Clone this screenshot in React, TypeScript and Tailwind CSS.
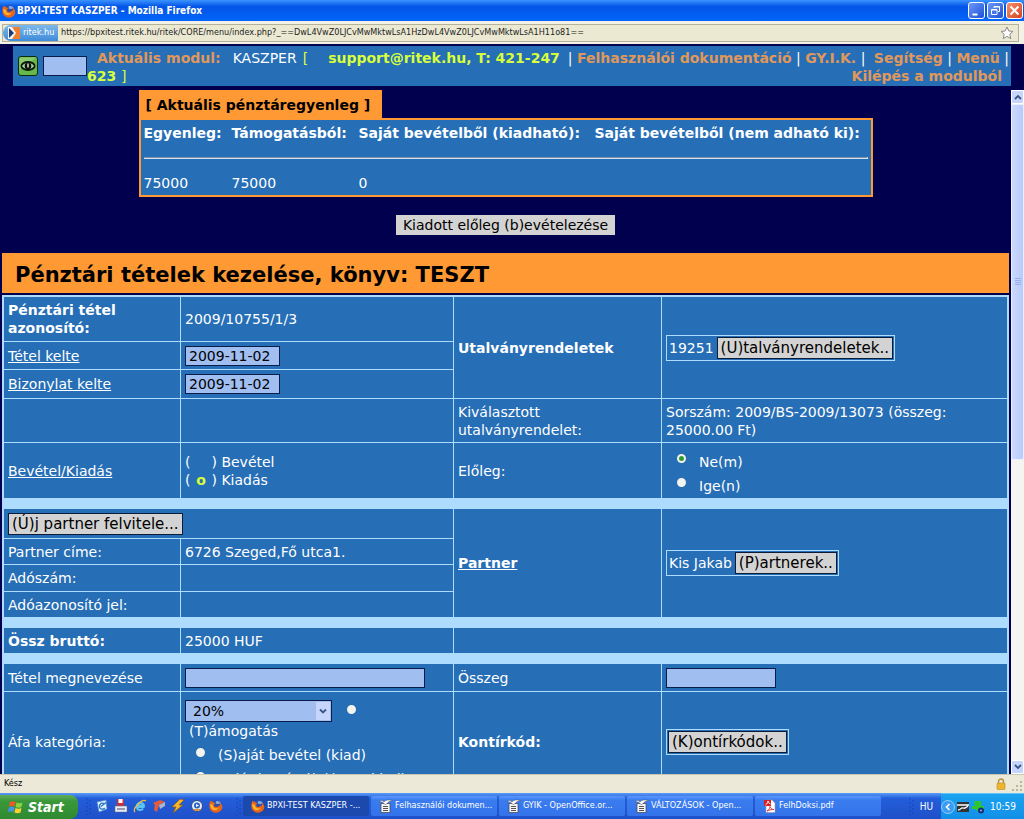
import React from "react";

const UI = "font-['DejaVu_Sans_Condensed','DejaVu_Sans',sans-serif]";

function FirefoxIcon({ className = "size-3.5" }: { className?: string }) {
  return (
    <svg viewBox="0 0 16 16" className={className + " shrink-0"} aria-hidden="true">
      <circle cx="8.5" cy="7.5" r="6" fill="#2b4fa8" />
      <path d="M8 2.500c2-.8 4.500 0 5.500 2l-3 1.500-3-1z" fill="#7fa9e6" />
      <path d="M1.500 2c1 .8 1.800 1 3 1L7 5 5.500 7c1 2.500 4 2.500 5 1 2 .5 2.500-2 1.500-4 3 1.500 4 5 2.500 8-2 4-8.500 5-12 1.500C-.5 10.500.2 5.500 1.500 2z" fill="#e8641b" />
      <path d="M1.800 5c.8 1 1.700 1.500 2.700 1.500C4 10 8 12 11 10c-1 3-6 4-8.300.5C1.500 9 1.200 7 1.800 5z" fill="#ffb52e" />
    </svg>
  );
}

function WriterIcon() {
  return (
    <svg viewBox="0 0 14 14" className="size-3.5 shrink-0" aria-hidden="true">
      <path d="M2 4.500h9v9H2z" fill="#f4f4f4" stroke="#444" strokeWidth=".7" />
      <path d="M4 7.500h5M4 9.500h5M4 11.500h5" stroke="#555" />
      <path d="M0 2.500c2-1.500 3.800-1 5 .5C6.500 1 9 .5 13.500 1.500 10.500 2 8.500 3.500 6.500 6 5 3.800 3 2.800 0 2.500z" fill="#fff" stroke="#555" strokeWidth=".5" />
    </svg>
  );
}

function PdfIcon() {
  return (
    <svg viewBox="0 0 14 14" className="size-3.5 shrink-0" aria-hidden="true">
      <path d="M3 1h6l3 3v9.500H3z" fill="#fff" stroke="#999" strokeWidth=".6" />
      <path d="M1 1h7v6H1z" fill="#d4202a" />
      <path d="M2.500 6c2-1.500 2.500-3 2.500-4 .5 2 1.500 2.500 2.500 3" stroke="#fff" fill="none" />
      <path d="M4 12c3-2 3-3.500 3-4.500.5 2 2 3 4 3-2.500 0-5 .5-7 1.500z" stroke="#d4202a" strokeWidth=".9" fill="none" />
    </svg>
  );
}

function TitleBar() {
  return (
    <header className="flex h-[21px] shrink-0 items-center gap-px bg-linear-to-b from-[#3a93ff] via-[#0455e6] via-30% to-[#0065fb] pr-px pl-0.5 text-white">
      <FirefoxIcon />
      <h1 className="flex-1 text-[10px] font-bold whitespace-nowrap">BPXI-TEST KASZPER - Mozilla Firefox</h1>
      <div className="flex gap-0.5">
        <button aria-label="Kis méret" className="size-[17px] rounded-[3px] border border-white bg-linear-to-br from-[#6d97f8] to-[#1c4fd8]">
          <svg viewBox="0 0 15 15"><path d="M3.500 10.500h5v2h-5z" fill="#fff" /></svg>
        </button>
        <button aria-label="Előző méret" className="size-[17px] rounded-[3px] border border-white bg-linear-to-br from-[#6d97f8] to-[#1c4fd8]">
          <svg viewBox="0 0 15 15" fill="none" stroke="#fff"><path d="M6 5V3.500h5.500v5H10M6 4h5.500M3.500 6.500h5.500v5H3.500zM3.500 7h5.500" /></svg>
        </button>
        <button aria-label="Bezárás" className="size-[17px] rounded-[3px] border border-white bg-linear-to-br from-[#f0906c] to-[#d8401a]">
          <svg viewBox="0 0 15 15" stroke="#fff" strokeWidth="2"><path d="M3.500 3.500l8 8M11.500 3.500l-8 8" /></svg>
        </button>
      </div>
    </header>
  );
}

function AddressBar() {
  return (
    <div className="h-[23px] shrink-0 bg-[#f4f2e6] pt-[3px] pr-[5px] pl-0.5">
      <div className="flex h-[18px] items-center border border-[#b5b29c] bg-[#ece9d3] pr-1">
        <span className="flex h-4 w-[55px] shrink-0 items-center gap-[3px] rounded-l-lg bg-linear-to-b from-[#7cb8ea] to-[#3f8bd8] pl-[5px] text-[9px] text-white">
          <svg viewBox="0 0 12 12" className="size-3 shrink-0" aria-hidden="true">
            <path d="M0 0h12v12H0z" fill="#f5f5f5" />
            <path d="M4 0h8v12H4l4-6z" fill="#f08030" />
            <path d="M1 1l5 5-5 5z" fill="#1d3c78" />
          </svg>
          ritek.hu
        </span>
        <input
          aria-label="Cím"
          className="min-w-0 flex-1 bg-transparent pl-[3px] text-[9px] text-[#222] outline-none"
          defaultValue="https://bpxitest.ritek.hu/ritek/CORE/menu/index.php?_==DwL4VwZ0LJCvMwMktwLsA1HzDwL4VwZ0LJCvMwMktwLsA1H11o81=="
        />
        <svg viewBox="0 0 14 14" className="size-3.5 shrink-0" aria-hidden="true">
          <path d="M7 1l1.800 4 4.200.4-3.200 2.900 1 4.400L7 10.400l-3.800 2.300 1-4.400L1 5.400 5.200 5z" fill="#fff" stroke="#8a8a8a" />
        </svg>
      </div>
    </div>
  );
}

function Bar() {
  return <span className="font-normal text-white">|</span>;
}

function ModuleHeader() {
  return (
    <div className="shrink-0 bg-[#00004f] pt-0.5 pr-[13px] pb-1 pl-[13px]">
      <div className="flex h-10 items-start bg-[#266eb6] text-sm leading-[18px] font-bold whitespace-nowrap">
        <svg viewBox="0 0 20 20" className="mt-2.5 ml-[5px] size-5 shrink-0" aria-hidden="true">
          <rect x=".5" y=".5" width="19" height="19" rx="2.500" fill="#66b84a" stroke="#0b2c10" />
          <path d="M1.500 1.500h17L1.500 14z" fill="#9ed889" opacity=".6" />
          <ellipse cx="10" cy="10" rx="7.500" ry="5" fill="#0c1a0c" />
          <path d="M4 10c2-4 10-4 12 0-2 4-10 4-12 0z" fill="#a8d596" />
          <circle cx="10" cy="10" r="3.300" fill="#0a100a" />
          <path d="M9.300 7.500h1.400v4H9.300z" fill="#e8f8e0" />
        </svg>
        <input aria-label="Gyorskód" className="mt-2.5 ml-[5px] h-5 w-11 shrink-0 border border-[#0a1d4a] bg-[#a1bef0] outline-none" />
        <p className="pt-[3px] text-[#d8ff3c]">
          <span className="pl-2.5 text-[#e0985a]">Aktuális modul:</span>
          <span className="pl-3 font-normal text-white">KASZPER</span>
          <span className="pl-1.5 font-normal">[</span>
          <span className="pr-2 pl-5">support@ritek.hu, T: 421-247</span>
          <br />
          623 <span className="font-normal">]</span>
        </p>
        <nav className="flex-1 pt-[3px] pr-0.5 text-[#e0985a]">
          <div className="flex justify-between">
            <Bar />
            <a href="#dok">Felhasználói dokumentáció</a>
            <Bar />
            <a href="#gyik">GY.I.K.</a>
            <Bar />
            <a href="#segitseg" className="pl-1">Segítség</a>
            <Bar />
            <a href="#menu">Menü</a>
            <Bar />
          </div>
          <div className="pr-[7px] text-right">
            <a href="#kilepes">Kilépés a modulból</a>
          </div>
        </nav>
      </div>
    </div>
  );
}

function Balance() {
  return (
    <section className="mx-auto w-fit">
      <h2 className="h-7 w-fit bg-[#ff9933] pt-1.5 pr-3 pl-[7px] text-sm leading-[18px] font-bold text-black">[ Aktuális pénztáregyenleg ]</h2>
      <div className="border-2 border-[#ff9933] bg-[#266eb6] px-[3px] pb-[3px]">
        <table className="text-sm leading-[18px] text-white">
          <thead>
            <tr className="text-left whitespace-nowrap">
              <th className="min-w-[88px] pt-1">Egyenleg:</th>
              <th className="min-w-[127px] pt-1">Támogatásból:</th>
              <th className="min-w-[236px] pt-1">Saját bevételből (kiadható):</th>
              <th className="min-w-[273px] pt-1">Saját bevételből (nem adható ki):</th>
            </tr>
          </thead>
          <tbody>
            <tr>
              <td colSpan={4} className="py-[15px]">
                <hr className="h-0.5 border-t border-r border-b border-t-[#7f8fa8] border-r-white border-b-[#d5e2f2]" />
              </td>
            </tr>
            <tr>
              <td>75000</td>
              <td>75000</td>
              <td>0</td>
              <td></td>
            </tr>
          </tbody>
        </table>
      </div>
    </section>
  );
}

function GreyButton({ children }: { children: React.ReactNode }) {
  return (
    <button className="h-[22px] border border-[#0c1c38] bg-[#d3d3d3] px-[3px] text-[15px] leading-[18px] whitespace-nowrap text-black">
      {children}
    </button>
  );
}

function Framed({ text, children }: { text?: string; children: React.ReactNode }) {
  return (
    <div className="flex w-fit items-center gap-0.5 border border-[#addcff] p-px">
      {text && <span className="px-px">{text}</span>}
      {children}
    </div>
  );
}

const cell = "bg-[#266eb6] px-1 py-0";
const field = "block border border-[#0a1d4a] bg-[#a1bef0] text-black outline-none";
const radio =
  "size-[9px] shrink-0 appearance-none rounded-full border-2 border-[#f4f4ee] bg-[#f4f4ee] checked:bg-[#2f9a2f]";

function Spacer() {
  return (
    <tr className="h-[9px]">
      <td colSpan={4}></td>
    </tr>
  );
}

function RadioLine({ id, name, label, checked }: { id: string; name: string; label: string; checked?: boolean }) {
  return (
    <div className="flex h-6 items-center gap-[13px] pl-[11px]">
      <input id={id} type="radio" name={name} defaultChecked={checked} className={radio + " mb-1.5"} />
      <label htmlFor={id}>{label}</label>
    </div>
  );
}

function ItemForm() {
  return (
    <table className="w-full table-fixed border-separate border-spacing-px border border-[#addcff] bg-[#addcff] text-sm leading-[18px] text-white">
      <colgroup>
        <col className="w-[176px]" />
        <col className="w-[272px]" />
        <col className="w-[207px]" />
        <col />
      </colgroup>
      <tbody>
        <tr className="h-11">
          <th className={cell + " text-left"}>Pénztári tétel<br />azonosító:</th>
          <td className={cell}>2009/10755/1/3</td>
          <th rowSpan={3} className={cell + " text-left"}>Utalványrendeletek</th>
          <td rowSpan={3} className={cell}>
            <Framed text="19251"><GreyButton>(U)talványrendeletek..</GreyButton></Framed>
          </td>
        </tr>
        <tr className="h-[27px]">
          <td className={cell}><label htmlFor="tetel" className="underline">Tétel kelte</label></td>
          <td className={cell}><input id="tetel" defaultValue="2009-11-02" className={field + " h-5 w-[95px] px-[3px]"} /></td>
        </tr>
        <tr className="h-7">
          <td className={cell}><label htmlFor="bizonylat" className="underline">Bizonylat kelte</label></td>
          <td className={cell}><input id="bizonylat" defaultValue="2009-11-02" className={field + " h-5 w-[95px] px-[3px]"} /></td>
        </tr>
        <tr className="h-[43px]">
          <td className={cell}></td>
          <td className={cell}></td>
          <td className={cell}>Kiválasztott<br />utalványrendelet:</td>
          <td className={cell}>Sorszám: 2009/BS-2009/13073 (összeg: 25000.00 Ft)</td>
        </tr>
        <tr className="h-[55px]">
          <td className={cell}><span className="underline">Bevétel/Kiadás</span></td>
          <td className={cell}>
            <div className="flex"><span>(</span><span className="w-[21px]"></span><span>) Bevétel</span></div>
            <div className="flex"><span>(</span><b className="w-[21px] text-center text-[#d8ff3c]">o</b><span>) Kiadás</span></div>
          </td>
          <td className={cell}>Előleg:</td>
          <td className={cell + " pt-1.5"}>
            <RadioLine id="nem" name="eloleg" label="Ne(m)" checked />
            <RadioLine id="igen" name="eloleg" label="Ige(n)" />
          </td>
        </tr>
        <Spacer />
        <tr className="h-[29px]">
          <td colSpan={2} className={cell}><GreyButton>(Ú)j partner felvitele...</GreyButton></td>
          <th rowSpan={4} className={cell + " text-left"}><span className="underline">Partner</span></th>
          <td rowSpan={4} className={cell}>
            <Framed text="Kis Jakab"><GreyButton>(P)artnerek..</GreyButton></Framed>
          </td>
        </tr>
        <tr className="h-[25px]">
          <td className={cell}>Partner címe:</td>
          <td className={cell}>6726 Szeged,Fő utca1.</td>
        </tr>
        <tr className="h-[26px]">
          <td className={cell}>Adószám:</td>
          <td className={cell}></td>
        </tr>
        <tr className="h-[25px]">
          <td className={cell}>Adóazonosító jel:</td>
          <td className={cell}></td>
        </tr>
        <Spacer />
        <tr className="h-[25px]">
          <th className={cell + " text-left"}>Össz bruttó:</th>
          <td className={cell}>25000 HUF</td>
          <td colSpan={2} className={cell}></td>
        </tr>
        <Spacer />
        <tr className="h-[27px]">
          <td className={cell}><label htmlFor="megnevezes">Tétel megnevezése</label></td>
          <td className={cell}><input id="megnevezes" className={field + " h-5 w-60 px-[3px]"} /></td>
          <td className={cell}><label htmlFor="osszeg">Összeg</label></td>
          <td className={cell}><input id="osszeg" className={field + " h-5 w-[110px] px-[3px]"} /></td>
        </tr>
        <tr className="h-[100px]">
          <td className={cell}><label htmlFor="afa">Áfa kategória:</label></td>
          <td className={cell + " pt-2 align-top"}>
            <div className="flex items-center">
              <div className="grid w-[147px] items-center">
                <select id="afa" className={field + " col-start-1 row-start-1 h-[22px] w-full appearance-none px-[7px]"}>
                  <option>20%</option>
                </select>
                <svg viewBox="0 0 14 18" className="pointer-events-none col-start-1 row-start-1 mr-0.5 h-[18px] w-3.5 justify-self-end" aria-hidden="true">
                  <path d="M0 0h14v18H0z" fill="#c6d5fb" />
                  <path d="M4 7.500l3 3 3-3" stroke="#3d5588" strokeWidth="1.800" fill="none" />
                </svg>
              </div>
              <input id="tamogatas" type="radio" name="forras" className={radio + " mb-1 ml-[15px]"} />
            </div>
            <label htmlFor="tamogatas" className="block pl-1">(T)ámogatás</label>
            <div className="pt-[3px]">
              <RadioLine id="sajat-kiad" name="forras" label="(S)aját bevétel (kiad)" />
              <RadioLine id="sajat-nem" name="forras" label="Saját bevétel(n)(nem kiad)" />
            </div>
          </td>
          <th className={cell + " text-left"}>Kontírkód:</th>
          <td className={cell}><Framed><GreyButton>(K)ontírkódok..</GreyButton></Framed></td>
        </tr>
      </tbody>
    </table>
  );
}

function ScrollBar() {
  const btn = "flex h-3.5 w-full items-center justify-center rounded-xs border border-white bg-[#c6d5fb]";
  return (
    <div className="flex w-[13px] shrink-0 flex-col bg-[#f6f4f2]">
      <button aria-label="Fel" className={btn}>
        <svg viewBox="0 0 8 6" className="w-2"><path d="M1 5l3-3 3 3" stroke="#3d5588" strokeWidth="1.800" fill="none" /></svg>
      </button>
      <div className="flex basis-[52%] items-center justify-center rounded-xs border border-[#e8efff] bg-linear-to-r from-[#cbd9fe] to-[#b9cbfa]">
        <svg viewBox="0 0 6 8" className="w-1.5"><path d="M0 .5h6M0 2.500h6M0 4.500h6M0 6.500h6" stroke="#98b0ee" /></svg>
      </div>
      <div className="flex-1"></div>
      <button aria-label="Le" className={btn}>
        <svg viewBox="0 0 8 6" className="w-2"><path d="M1 1l3 3 3-3" stroke="#3d5588" strokeWidth="1.800" fill="none" /></svg>
      </button>
    </div>
  );
}

function StatusBar() {
  return (
    <div className="flex h-[19px] shrink-0 items-center border-t border-[#c9c6b4] bg-[#ece9d8] pl-1 text-[9px] text-black">
      <span className="flex-1">Kész</span>
      <svg viewBox="0 0 10 12" className="mr-1 h-3 w-2.5" aria-hidden="true">
        <path d="M2.500 6V3.500a2.500 2.500 0 015 0V6" stroke="#b09040" strokeWidth="1.400" fill="none" />
        <rect x="1" y="5" width="8" height="6.500" rx="1" fill="#eeb52c" stroke="#b98a1c" strokeWidth=".6" />
      </svg>
      <svg viewBox="0 0 14 14" className="size-3.5 self-end" aria-hidden="true">
        <path d="M10 2h2v2h-2zM6 6h2v2H6zM10 6h2v2h-2zM2 10h2v2H2zM6 10h2v2H6zM10 10h2v2h-2z" fill="#b8b5a0" />
      </svg>
    </div>
  );
}

function Grip() {
  return (
    <svg viewBox="0 0 5 18" className="h-[18px] w-[5px] shrink-0" aria-hidden="true">
      <path d="M1 1v17M4 3v15" stroke="#123fa8" strokeDasharray="1.500 2.500" />
    </svg>
  );
}

function QuickLaunch() {
  return (
    <div className="flex items-center gap-[5px]">
      <svg viewBox="0 0 14 14" className="size-3.5"><path d="M2 3l9-2 1 9-8 3z" fill="#e8f3ff" stroke="#4b88c8" strokeWidth=".8" /><path d="M9.500 5a3 3 0 10 .3 4M6 7.500l5-4" stroke="#2878c8" strokeWidth="1.400" fill="none" /></svg>
      <svg viewBox="0 0 14 14" className="size-3.5"><path d="M3 0h7v7H3z" fill="#c8313f" /><path d="M4.500 0h4v4h-4z" fill="#fff" /><path d="M1 7h12v6H1z" fill="#e7edf8" stroke="#667" strokeWidth=".5" /><path d="M3 10h8" stroke="#446" /></svg>
      <svg viewBox="0 0 14 14" className="size-3.5"><path d="M11.500 8H4a3 3 0 003 3c1.500 0 2.500-.5 3-1.500M4 6.500c.5-3 6-3.500 7 0z" stroke="#5cc3f5" strokeWidth="2" fill="none" /><path d="M2 13C-1 10 9-1 13 2" stroke="#f0c33a" strokeWidth="1.200" fill="none" /></svg>
      <svg viewBox="0 0 14 14" className="size-3.5"><path d="M1 4l7-3 5 2-6 3-2 7-3-2 1-5z" fill="#e35a3c" /><path d="M7 6l6-3v4l-5 3z" fill="#a9b6c8" /></svg>
      <svg viewBox="0 0 14 14" className="size-3.5"><path d="M9 0L1 8h4l-3 6 10-8H8l5-5z" fill="#f5b52a" stroke="#8b5a10" strokeWidth=".7" /></svg>
      <svg viewBox="0 0 14 14" className="size-3.5"><circle cx="7" cy="7" r="5.500" fill="#e6edf8" stroke="#334b78" /><path d="M3 10a5 5 0 008 0z" fill="#e48a2c" /><circle cx="7" cy="6.500" r="3" fill="#2a62c4" /><path d="M6 5l3 1.500L6 8z" fill="#fff" /></svg>
      <FirefoxIcon />
    </div>
  );
}

function Task({ icon, label, active }: { icon: React.ReactNode; label: string; active?: boolean }) {
  return (
    <button
      className={
        "flex h-5 w-[126px] min-w-0 items-center gap-0.5 rounded-xs pl-2 text-left text-[9px] whitespace-nowrap text-white " +
        (active ? "bg-[#1b49ae]" : "bg-linear-to-b from-[#5a96fb] via-[#3a7cf0] via-20% to-[#3473ea]")
      }
    >
      {icon}
      <span>{label}</span>
    </button>
  );
}

function TaskBar() {
  return (
    <footer className="flex h-[26px] shrink-0 items-center bg-linear-to-b from-[#5c9bf6] via-[#245edb] via-20% to-[#1f50c8]">
      <button className="mt-0.5 flex h-6 w-[78px] shrink-0 items-center gap-1 rounded-r-lg bg-linear-to-b from-[#5fae5c] via-[#3a983a] via-25% to-[#2f8a30] pl-2 text-sm font-bold text-white italic">
        <svg viewBox="0 0 16 16" className="size-4" aria-hidden="true">
          <path d="M2 3c2-1 4-1 5.500 0L6.500 7.500c-2-1-3.500-1-5.500 0z" fill="#ee5a2a" />
          <path d="M8.500 3.500c2 1 4 1 6 0L13.500 8c-2 1-4 1-6 0z" fill="#8bd13f" />
          <path d="M1 8.500c2-1 3.500-1 5.500 0L5.500 13c-2-1-3.500-1-5.500 0z" fill="#4a90f0" />
          <path d="M7.500 9c2 1 4 1 6 0l-1 4.500c-2 1-4 1-6 0z" fill="#fbd030" />
        </svg>
        <span>Start</span>
      </button>
      <div className="flex w-[158px] shrink-0 items-center gap-1 pl-2">
        <Grip />
        <QuickLaunch />
      </div>
      <div className="flex min-w-0 flex-1 items-center gap-0.5">
        <Grip />
        <Task icon={<FirefoxIcon />} label="BPXI-TEST KASZPER -..." active />
        <Task icon={<WriterIcon />} label="Felhasználói dokumen..." />
        <Task icon={<WriterIcon />} label="GYIK - OpenOffice.or..." />
        <Task icon={<WriterIcon />} label="VÁLTOZÁSOK - Open..." />
        <Task icon={<PdfIcon />} label="FelhDoksi.pdf" />
      </div>
      <div className="flex shrink-0 items-center gap-1.5 pr-2 text-[10px] text-white">
        <Grip />
        <span>HU</span>
      </div>
      <div className="flex h-full shrink-0 items-center gap-px border-t border-[#5cc4fa] bg-linear-to-b from-[#1ba2f0] to-[#1290e8] pr-2 text-[10px] text-white">
        <svg viewBox="0 0 14 14" className="size-3.5"><circle cx="7" cy="7" r="6.500" fill="#3c9cf5" stroke="#bfe2ff" strokeWidth=".7" /><path d="M8.500 4l-3 3 3 3" stroke="#fff" strokeWidth="1.600" fill="none" /></svg>
        <svg viewBox="0 0 14 14" className="size-3.5"><path d="M1 2h12v10H1z" fill="#333" /><path d="M1 5h12M2 10c3 0 3-3 5-2s3 0 5-2" stroke="#fff" strokeWidth="1.300" fill="none" /></svg>
        <svg viewBox="0 0 14 14" className="size-3.5"><path d="M3 1h7v5h3v3H9v4L4 9H1V6h3z" fill="#2ec62e" /><circle cx="10" cy="10.500" r="3" fill="#15307c" /><circle cx="10" cy="10.500" r="1" fill="#8ab0f0" /></svg>
        <span className="pl-1">10:59</span>
      </div>
    </footer>
  );
}

export default function App() {
  return (
    <div className={"flex h-screen flex-col overflow-hidden " + UI}>
      <TitleBar />
      <AddressBar />
      <div className="flex min-h-0 flex-1 flex-col bg-[#00004f] font-['DejaVu_Sans',sans-serif]">
        <ModuleHeader />
        <div className="flex min-h-0 flex-1">
          <main className="min-w-0 flex-1 overflow-hidden pr-0.5 pl-0.5">
            <Balance />
            <div className="flex justify-center py-[18px]">
              <button className="h-5 bg-[#d3d3d3] px-[7px] text-sm leading-[18px] text-black">Kiadott előleg (b)evételezése</button>
            </div>
            <h2 className="mb-0.5 bg-[#ff9933] px-[13px] pt-2 pb-1 text-[21px] leading-7 font-bold text-black">Pénztári tételek kezelése, könyv: TESZT</h2>
            <ItemForm />
          </main>
          <ScrollBar />
        </div>
      </div>
      <StatusBar />
      <TaskBar />
    </div>
  );
}
